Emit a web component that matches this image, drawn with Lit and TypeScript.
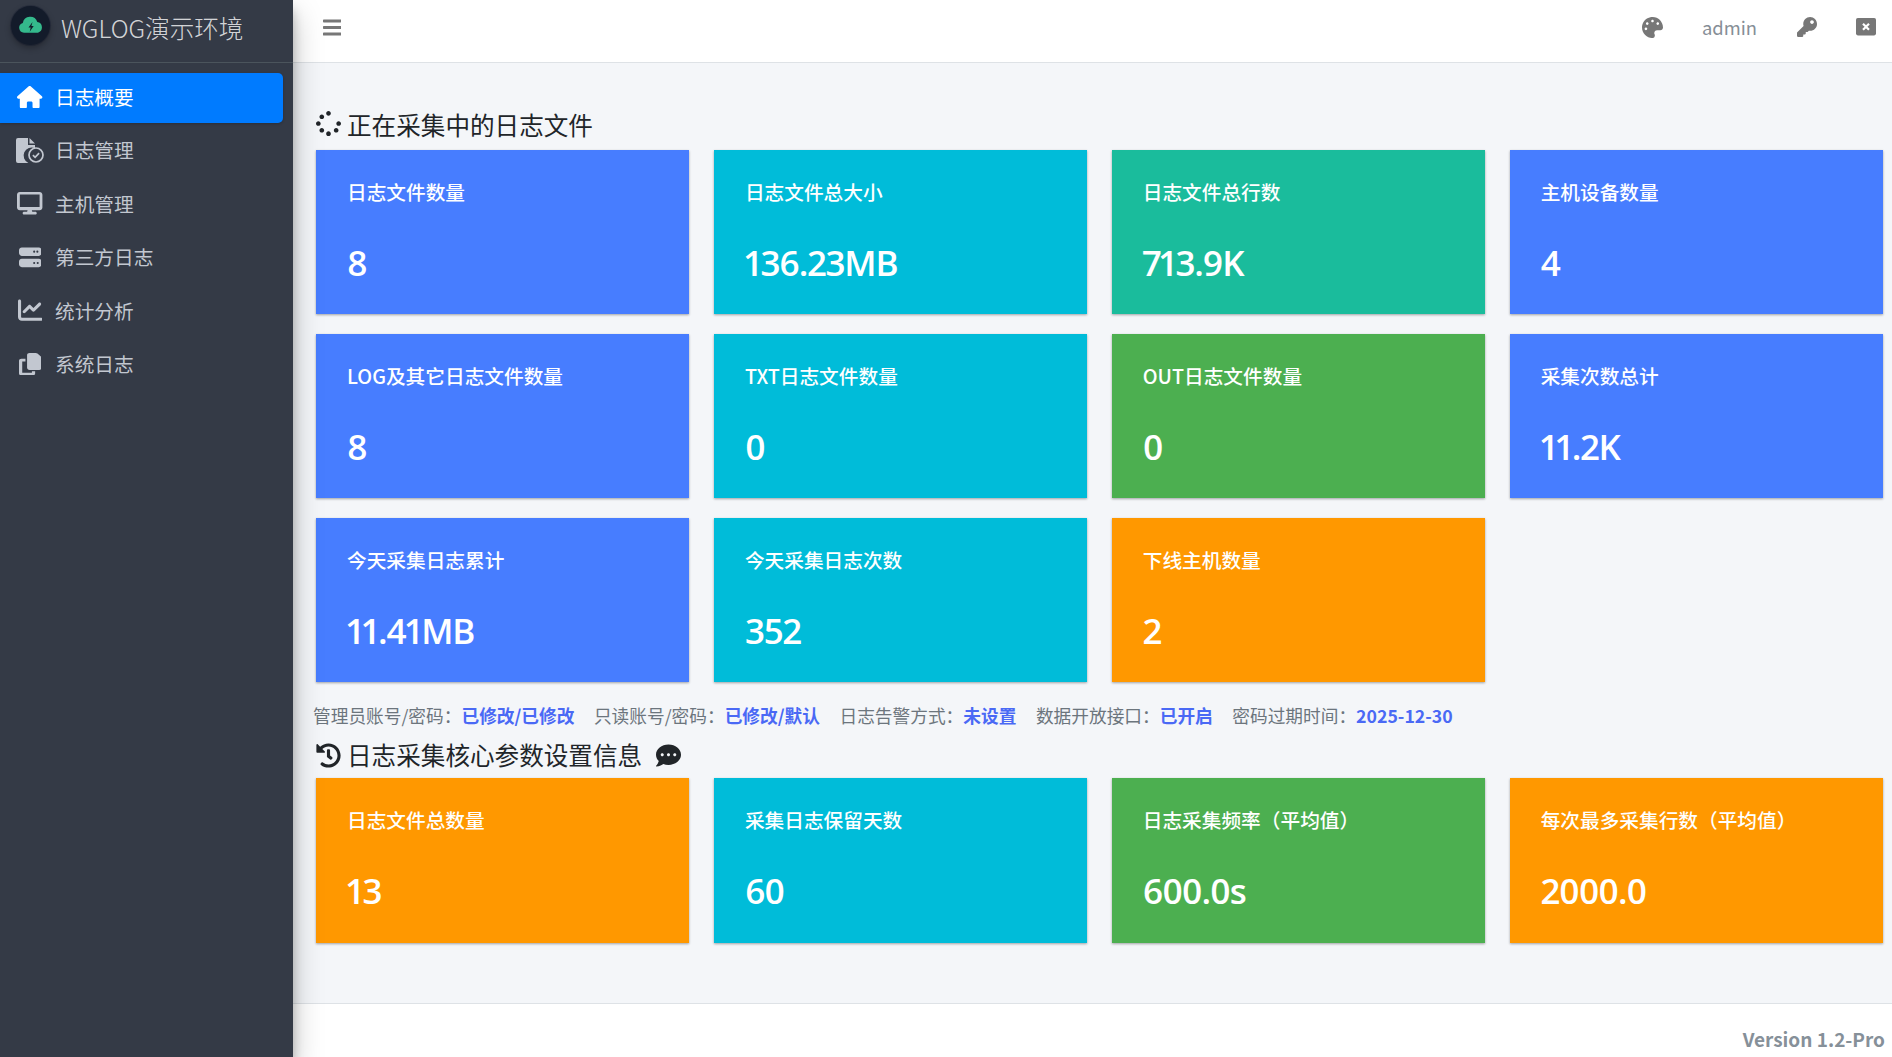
import { LitElement, html, css, svg } from "lit";
import { customElement } from "lit/decorators.js";

const I: Record<string, [number, string]> = {
  home: [576, "M575.8 255.5c0 18-15 32.100-32 32.100h-32l.7 160.200c0 2.700-.2 5.400-.5 8.100V472c0 22.100-17.900 40-40 40H456c-1.100 0-2.200 0-3.300-.1c-1.400 .1-2.800 .1-4.200 .1H416 392c-22.100 0-40-17.900-40-40V448 384c0-17.700-14.300-32-32-32H256c-17.700 0-32 14.300-32 32v64 24c0 22.100-17.900 40-40 40H160 128.100c-1.500 0-3-.1-4.500-.2c-1.200 .1-2.400 .2-3.600 .2H104c-22.100 0-40-17.900-40-40V360c0-.9 0-1.900 .1-2.800V287.600H32c-18 0-32-14-32-32.100c0-9 3-17 10-24L266.400 8c7-7 15-8 22-8s15 2 21 7L564.800 231.500c8 7 12 15 11 24z"],
  desktop: [576, "M64 0C28.700 0 0 28.700 0 64V352c0 35.300 28.700 64 64 64H240l-10.700 32H160c-17.700 0-32 14.300-32 32s14.300 32 32 32H416c17.700 0 32-14.300 32-32s-14.300-32-32-32H346.700L336 416H512c35.300 0 64-28.700 64-64V64c0-35.300-28.700-64-64-64H64zM512 56V340H64V56H512z"],
  server: [512, "M64 32C28.700 32 0 60.700 0 96v64c0 35.300 28.700 64 64 64H448c35.300 0 64-28.700 64-64V96c0-35.300-28.700-64-64-64H64zm280 72a24 24 0 1 1 0 48 24 24 0 1 1 0-48zm48 24a24 24 0 1 1 48 0 24 24 0 1 1-48 0zM64 288c-35.300 0-64 28.700-64 64v64c0 35.300 28.700 64 64 64H448c35.300 0 64-28.700 64-64V352c0-35.300-28.700-64-64-64H64zm280 72a24 24 0 1 1 0 48 24 24 0 1 1 0-48zm56 24a24 24 0 1 1 48 0 24 24 0 1 1-48 0z"],
  chart: [512, "M64 64c0-17.700-14.300-32-32-32S0 46.300 0 64V400c0 44.200 35.800 80 80 80H480c17.700 0 32-14.300 32-32s-14.300-32-32-32H80c-8.800 0-16-7.200-16-16V64zm406.600 86.600c12.500-12.500 12.500-32.800 0-45.300s-32.800-12.500-45.300 0L320 210.700l-57.400-57.400c-12.500-12.500-32.800-12.500-45.300 0l-112 112c-12.500 12.500-12.500 32.800 0 45.300s32.800 12.500 45.300 0L240 221.300l57.400 57.400c12.500 12.500 32.800 12.500 45.300 0l128-128z"],
  copy: [448, "M208 0H332.100c12.700 0 24.900 5.100 33.900 14.100l67.900 67.900c9 9 14.100 21.200 14.100 33.900V336c0 26.500-21.500 48-48 48H208c-26.500 0-48-21.500-48-48V48c0-26.500 21.500-48 48-48zM48 128h80v64H64V448H256V416h64v48c0 26.500-21.500 48-48 48H48c-26.500 0-48-21.500-48-48V176c0-26.500 21.500-48 48-48z"],
  bars: [448, "M16 132h416c8.837 0 16-7.163 16-16V76c0-8.837-7.163-16-16-16H16C7.163 60 0 67.163 0 76v40c0 8.837 7.163 16 16 16zm0 160h416c8.837 0 16-7.163 16-16v-40c0-8.837-7.163-16-16-16H16c-8.837 0-16 7.163-16 16v40c0 8.837 7.163 16 16 16zm0 160h416c8.837 0 16-7.163 16-16v-40c0-8.837-7.163-16-16-16H16c-8.837 0-16 7.163-16 16v40c0 8.837 7.163 16 16 16z"],
  palette: [512, "M204.3 5C104.9 24.4 24.8 104.3 5.2 203.4c-37 187 131.7 326.4 258.8 306.7 41.2-6.4 61.4-54.6 42.5-91.7-23.1-45.4 9.9-98.4 60.9-98.4h79.7c35.8 0 64.8-29.6 64.9-65.3C511.5 97.1 368.1-26.9 204.3 5zM96 320c-17.7 0-32-14.3-32-32s14.3-32 32-32 32 14.3 32 32-14.3 32-32 32zm32-128c-17.7 0-32-14.3-32-32s14.3-32 32-32 32 14.3 32 32-14.3 32-32 32zm128-64c-17.7 0-32-14.3-32-32s14.3-32 32-32 32 14.3 32 32-14.3 32-32 32zm128 64c-17.7 0-32-14.3-32-32s14.3-32 32-32 32 14.3 32 32-14.3 32-32 32z"],
  key: [512, "M512 176.001C512 273.203 433.202 352 336 352c-11.22 0-22.19-1.062-32.827-3.069l-24.012 27.014A23.999 23.999 0 0 1 261.223 384H224v40c0 13.255-10.745 24-24 24h-40v40c0 13.255-10.745 24-24 24H24c-13.255 0-24-10.745-24-24v-78.059c0-6.365 2.529-12.47 7.029-16.971l161.802-161.802C163.108 213.814 160 195.271 160 176 160 78.798 238.797.001 335.999 0 433.488-.001 512 78.511 512 176.001zM336 128c0 26.51 21.49 48 48 48s48-21.49 48-48-21.49-48-48-48-48 21.49-48 48z"],
  dots: [512, "M256 32C114.6 32 0 125.1 0 240c0 49.6 21.4 95 57 130.7C44.5 421.1 2.7 466 2.2 466.5c-2.2 2.3-2.8 5.7-1.5 8.7S4.8 480 8 480c66.3 0 116-31.8 140.6-51.4 32.7 12.3 69 19.4 107.4 19.4 141.4 0 256-93.1 256-208S397.4 32 256 32zM128 272c-17.7 0-32-14.3-32-32s14.3-32 32-32 32 14.3 32 32-14.3 32-32 32zm128 0c-17.7 0-32-14.3-32-32s14.3-32 32-32 32 14.3 32 32-14.3 32-32 32zm128 0c-17.7 0-32-14.3-32-32s14.3-32 32-32 32 14.3 32 32-14.3 32-32 32z"],
  history: [512, "M504 255.531c.253 136.64-111.18 248.372-247.82 248.468-59.015.042-113.223-20.53-155.822-54.911-11.077-8.94-11.905-25.541-1.839-35.607l11.267-11.267c8.609-8.609 22.353-9.551 31.891-1.984C173.062 425.135 212.781 440 256 440c101.705 0 184-82.311 184-184 0-101.705-82.311-184-184-184-48.814 0-93.149 18.969-126.068 49.932l50.754 50.754c10.08 10.08 2.941 27.314-11.313 27.314H24c-8.837 0-16-7.163-16-16V38.627c0-14.254 17.234-21.393 27.314-11.314l49.372 49.372C129.209 34.136 189.552 8 256 8c136.81 0 247.747 110.78 248 247.531zm-180.912 78.784l9.823-12.63c8.138-10.463 6.253-25.542-4.21-33.679L288 256.349V152c0-13.255-10.745-24-24-24h-16c-13.255 0-24 10.745-24 24v135.651l65.409 50.874c10.463 8.137 25.541 6.253 33.679-4.21z"],
  spinner: [512, "M304 48c0 26.51-21.49 48-48 48s-48-21.49-48-48 21.49-48 48-48 48 21.49 48 48zm-48 368c-26.51 0-48 21.49-48 48s21.49 48 48 48 48-21.49 48-48-21.49-48-48-48zm208-208c-26.51 0-48 21.49-48 48s21.49 48 48 48 48-21.49 48-48-21.49-48-48-48zM96 256c0-26.51-21.49-48-48-48S0 229.49 0 256s21.49 48 48 48 48-21.49 48-48zm22.922 90.156c-26.51 0-48 21.49-48 48s21.49 48 48 48 48-21.49 48-48c0-26.509-21.491-48-48-48zm294.156 0c-26.51 0-48 21.49-48 48s21.49 48 48 48 48-21.49 48-48c0-26.509-21.49-48-48-48zM118.922 69.844c-26.51 0-48 21.49-48 48s21.49 48 48 48 48-21.49 48-48-21.491-48-48-48z"],
};

const icon = (n: string, cls = "") =>
  html`<svg class="ic ${cls}" viewBox="0 0 ${I[n][0]} 512" preserveAspectRatio="none" fill="currentColor"><path d=${I[n][1]} fill-rule="evenodd"></path></svg>`;

const fileCheck = html`<svg class="filecheck" viewBox="0 0 28 25" fill="none">
  ${svg`<path fill="#c2c7d0" d="M2 0h10v7h7v3.200A8 8 0 0 0 12.400 25H2a2 2 0 0 1-2-2V2a2 2 0 0 1 2-2zM13.500 0L19 5.500H13.500z"></path>
  <circle cx="20" cy="17" r="7" stroke="#c2c7d0" stroke-width="1.700" fill="#343a46"></circle>
  <path d="M16.900 17.200l2.200 2.200 4-4.200" stroke="#c2c7d0" stroke-width="1.700"></path>`}
</svg>`;

const closeIcon = html`<svg class="closeic" viewBox="0 0 20 18">
  ${svg`<rect width="20" height="17.400" rx="1.800" fill="#777"></rect>
  <path d="M7 5.700l6 6M13 5.700l-6 6" stroke="#fff" stroke-width="2.200"></path>`}
</svg>`;

const NAV: [string, string][] = [
  ["home", "日志概要"],
  ["file", "日志管理"],
  ["desktop", "主机管理"],
  ["server", "第三方日志"],
  ["chart", "统计分析"],
  ["copy", "系统日志"],
];

type C = [string, string, string];
const BLUE = "#477dff", CYAN = "#00bcd9", TEAL = "#1abc9c", GREEN = "#4caf50", ORANGE = "#ff9800";
const TOP: C[] = [
  ["日志文件数量", "8", BLUE],
  ["日志文件总大小", "136.23MB", CYAN],
  ["日志文件总行数", "713.9K", TEAL],
  ["主机设备数量", "4", BLUE],
  ["LOG及其它日志文件数量", "8", BLUE],
  ["TXT日志文件数量", "0", CYAN],
  ["OUT日志文件数量", "0", GREEN],
  ["采集次数总计", "11.2K", BLUE],
  ["今天采集日志累计", "11.41MB", BLUE],
  ["今天采集日志次数", "352", CYAN],
  ["下线主机数量", "2", ORANGE],
];
const CORE: C[] = [
  ["日志文件总数量", "13", ORANGE],
  ["采集日志保留天数", "60", CYAN],
  ["日志采集频率（平均值）", "600.0s", GREEN],
  ["每次最多采集行数（平均值）", "2000.0", ORANGE],
];
const INFO: [string, string][] = [
  ["管理员账号/密码：", "已修改/已修改"],
  ["只读账号/密码：", "已修改/默认"],
  ["日志告警方式：", "未设置"],
  ["数据开放接口：", "已开启"],
  ["密码过期时间：", "2025-12-30"],
];

@customElement("app-root")
export class AppRoot extends LitElement {
  static styles = css`
    :host {
      display: block;
      height: 1057px;
      overflow: hidden;
      font-family: "Noto Sans CJK SC", "Noto Sans", sans-serif;
      background: #f4f6f9;
      color: #212529;
    }
    * { box-sizing: border-box; }
    .ic { display: block; height: 1em; width: auto; }
    .layout { display: flex; height: 100%; }
    .side {
      width: 293px;
      flex: none;
      background: #343a46;
      box-shadow: 0 14px 28px rgba(0,0,0,.25), 0 10px 10px rgba(0,0,0,.22);
      position: relative;
      z-index: 2;
    }
    .brand {
      height: 63px;
      border-bottom: 1px solid #4b545c;
      display: flex;
      align-items: flex-start;
      padding: 6px 0 0 11px;
      gap: 11px;
    }
    .logo {
      width: 39px;
      height: 39px;
      border-radius: 50%;
      background: #131b2a;
      box-shadow: 0 3px 6px rgba(0,0,0,.3), 0 0 0 1px #2a3040;
      display: flex;
      align-items: center;
      justify-content: center;
      flex: none;
    }
    .logo svg { width: 24px; height: 17px; display: block; margin-top: -2px; }
    .brand-t {
      font-size: 24.6px;
      font-weight: 300;
      line-height: 30px;
      color: rgba(255,255,255,.8);
      padding-top: 6px;
    }
    nav { padding-top: 10px; display: flex; flex-direction: column; gap: 3.400px; padding-right: 10px; }
    .item {
      height: 50px;
      border-radius: 0 5px 5px 0;
      display: flex;
      align-items: center;
      color: #c2c7d0;
      font-size: 19.68px;
      padding-left: 16px;
    }
    .item.on {
      background: #007bff;
      color: #fff;
      box-shadow: 0 1px 3px rgba(0,0,0,.2);
    }
    .t { line-height: 26px; margin-top: -2px; }
    .ni { width: 28px; display: flex; justify-content: center; margin-right: 11px; flex: none; font-size: 22.6px; margin-top: -2px; }
    .ni .cm { width: 24.700px; height: 24.400px; }
    .ni .cp { width: 22.600px; height: 22.600px; }
    .filecheck { width: 28px; height: 25px; display: block; }
    .main { flex: 1; min-width: 0; display: flex; flex-direction: column; }
    header {
      height: 63px;
      flex: none;
      background: #fff;
      border-bottom: 1px solid #dee2e6;
      display: flex;
      align-items: center;
      padding: 0 16px 8px 30px;
      color: #777;
    }
    .bars { font-size: 21px; }
    .right { margin-left: auto; display: flex; align-items: center; }
    .pal { font-size: 21px; }
    .adm { font-size: 18.4px; margin: 0 40px 0 39px; color: #868e96; }
    .key { font-size: 20px; }
    .closeic { display: block; width: 20px; height: 18px; margin-left: 39px; }
    .content { flex: 1; padding: 0 9px 0 23px; min-height: 0; }
    h3 {
      margin: 0;
      font-weight: 400;
      font-size: 24.6px;
      line-height: 34px;
      display: flex;
      align-items: center;
      color: #212529;
    }
    .h1 { margin-top: 40px; height: 47px; padding-bottom: 6px; gap: 6px; }
    .h1 .ic { font-size: 25px; }
    .grid {
      display: grid;
      grid-template-columns: repeat(4, minmax(0, 1fr));
      column-gap: 24.5px;
      row-gap: 20px;
    }
    .card {
      height: 164px;
      color: #fff;
      padding: 28px 31px 0;
      box-shadow: 0 1px 3px rgba(0,0,0,.12), 0 1px 2px rgba(0,0,0,.24);
    }
    .core .card { height: 165px; }
    .lab { font-size: 19.68px; font-weight: 500; line-height: 28px; }
    .val {
      font-family: "Open Sans", "Noto Sans CJK SC", sans-serif;
      font-variant-numeric: proportional-nums;
      font-size: 35px;
      font-weight: 600;
      letter-spacing: -1.100px;
      line-height: 48px;
      margin-top: 33px;
    }
    .info {
      margin: 18px 0 0 -3px;
      height: 30px;
      display: flex;
      gap: 19.500px;
      font-size: 17.7px;
      line-height: 30px;
      color: #6c757d;
    }
    .info b { color: #4a69f5; font-weight: 700; }
    .h2 { height: 36px; gap: 6px; margin-top: 7px; margin-bottom: 5px; padding-bottom: 3px; }
    .h2 .ic { font-size: 25px; margin-top: 3px; }
    .h2 .end { margin-left: 8px; }
    footer {
      height: 54px;
      flex: none;
      background: #fff;
      border-top: 1px solid #dee2e6;
      text-align: right;
      padding: 22px 7px 0 0;
      font-weight: 700;
      font-size: 19px;
      line-height: 26px;
      color: #869099;
    }
  `;

  card(c: C) {
    return html`<div class="card" style="background:${c[2]}">
      <div class="lab">${c[0]}</div>
      <div class="val">${c[1]}</div>
    </div>`;
  }

  navIcon(ic: string) {
    if (ic === "file") return fileCheck;
    if (ic === "chart") return icon(ic, "cm");
    if (ic === "copy") return icon(ic, "cp");
    return icon(ic);
  }

  render() {
    return html`<div class="layout">
      <aside class="side">
        <div class="brand">
          <div class="logo">
            <svg viewBox="0 0 24 17">
              <path fill="#34b98c" d="M5 16.700a5 5 0 0 1-1.200-9.800A7.500 7.500 0 0 1 18.300 6 5.500 5.500 0 0 1 19 16.700z"></path>
              <path fill="#131b2a" d="M13.500 6l-4 5.400h2.200l-1 4.300 4-5.600h-2.300z"></path>
            </svg>
          </div>
          <div class="brand-t">WGLOG演示环境</div>
        </div>
        <nav>
          ${NAV.map(
            ([ic, t], i) => html`<div class="item ${i === 0 ? "on" : ""}">
              <span class="ni">${this.navIcon(ic)}</span>
              <span class="t">${t}</span>
            </div>`
          )}
        </nav>
      </aside>
      <div class="main">
        <header>
          <span class="bars">${icon("bars")}</span>
          <div class="right">
            <span class="pal">${icon("palette")}</span>
            <span class="adm">admin</span>
            <span class="key">${icon("key")}</span>
            ${closeIcon}
          </div>
        </header>
        <div class="content">
          <h3 class="h1">${icon("spinner")}<span>正在采集中的日志文件</span></h3>
          <div class="grid">${TOP.map((c) => this.card(c))}</div>
          <div class="info">
            ${INFO.map(([a, b]) => html`<span>${a}<b>${b}</b></span>`)}
          </div>
          <h3 class="h2">${icon("history")}<span>日志采集核心参数设置信息</span><span class="end">${icon("dots")}</span></h3>
          <div class="grid core">${CORE.map((c) => this.card(c))}</div>
        </div>
        <footer>Version 1.2-Pro</footer>
      </div>
    </div>`;
  }
}
